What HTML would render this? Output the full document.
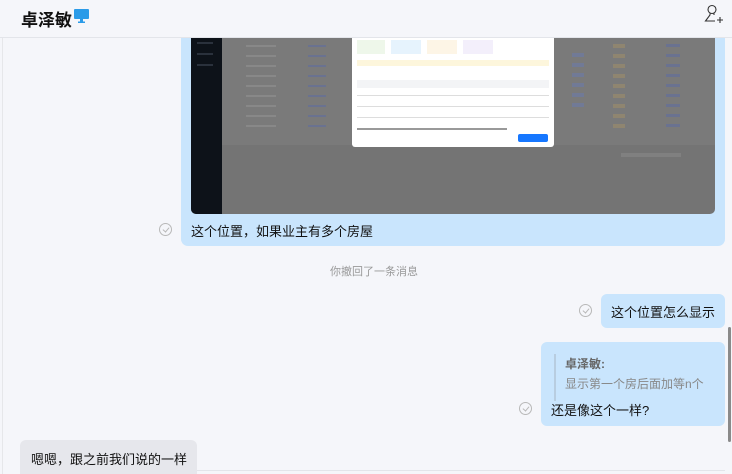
<!DOCTYPE html>
<html><head><meta charset="utf-8"><style>
*{margin:0;padding:0;box-sizing:border-box}
html,body{width:732px;height:474px;overflow:hidden}
body{background:#f5f6fa;font-family:"Liberation Sans","Noto Sans CJK SC",sans-serif;position:relative;color:#111}
.hdr{position:absolute;left:0;top:0;width:732px;height:38px;background:#f5f6fa;border-bottom:1px solid #e3e5ea}
.name{position:absolute;left:21px;top:6px;font-size:17px;font-weight:bold;color:#111}
.abs{position:absolute}
.bub{position:absolute;background:#c9e5fd;border-radius:6px}
.chk{position:absolute;width:13px;height:13px;border:1px solid #b8b8b8;border-radius:50%}
.chk:after{content:"";position:absolute;left:4px;top:2px;width:3px;height:5px;border:solid #b8b8b8;border-width:0 1px 1px 0;transform:rotate(40deg)}
.t{position:absolute;font-size:13px;white-space:nowrap;color:#111}
</style></head><body>
<div class="abs" style="left:0;top:38px;width:3px;height:436px;border-right:1px solid #e6e7ea"></div>
<div class="bub" style="left:181px;top:28px;width:544px;height:218px;border-radius:0 0 7px 7px"></div>
<div class="abs" style="left:191px;top:38px;width:524px;height:176px;background:#747474;border-radius:0 0 5px 5px;overflow:hidden">
  <div class="abs" style="left:0;top:0;width:31px;height:176px;background:#0d1219"></div>
  <div class="abs" style="left:31px;top:0;width:493px;height:107px;background:#7a7a7a"></div>
  <div class="abs" style="left:6px;top:4px;width:16px;height:2px;background:#2a313c"></div>
  <div class="abs" style="left:6px;top:15px;width:16px;height:2px;background:#2a313c"></div>
  <div class="abs" style="left:6px;top:26px;width:16px;height:2px;background:#2a313c"></div>
  <div class="abs" style="left:55px;top:4px;width:30px;height:90px;background:repeating-linear-gradient(#7a7a7a 0 3px,#888 3px 5px,#7a7a7a 5px 10px)"></div>
  <div class="abs" style="left:117px;top:4px;width:18px;height:90px;background:repeating-linear-gradient(#7a7a7a 0 3px,#6a7290 3px 5px,#7a7a7a 5px 10px)"></div>
  <div class="abs" style="left:381px;top:13px;width:12px;height:60px;background:repeating-linear-gradient(#7a7a7a 0 2px,#717a96 2px 6px,#7a7a7a 6px 10px)"></div>
  <div class="abs" style="left:422px;top:4px;width:12px;height:90px;background:repeating-linear-gradient(#7a7a7a 0 2px,#8f8570 2px 6px,#7a7a7a 6px 10px)"></div>
  <div class="abs" style="left:475px;top:4px;width:14px;height:90px;background:repeating-linear-gradient(#7a7a7a 0 2px,#6a7290 2px 5px,#7a7a7a 5px 10px)"></div>
  <div class="abs" style="left:161px;top:0;width:202px;height:109px;background:#fff;border-radius:0 0 3px 3px">
    <div class="abs" style="left:5px;top:2px;width:28px;height:14px;background:#eef7ea"></div>
    <div class="abs" style="left:39px;top:2px;width:30px;height:14px;background:#e6f3fd"></div>
    <div class="abs" style="left:75px;top:2px;width:30px;height:14px;background:#fdf5e6"></div>
    <div class="abs" style="left:111px;top:2px;width:30px;height:14px;background:#f3effb"></div>
    <div class="abs" style="left:5px;top:22px;width:192px;height:6px;background:#fdf6dc"></div>
    <div class="abs" style="left:5px;top:42px;width:192px;height:8px;background:#f3f4f6"></div>
    <div class="abs" style="left:5px;top:52px;width:192px;height:36px;background:repeating-linear-gradient(#fff 0 5px,#ddd 5px 6px,#fff 6px 11px)"></div>
    <div class="abs" style="left:5px;top:90px;width:150px;height:2px;background:#999"></div>
    <div class="abs" style="left:166px;top:96px;width:30px;height:8px;background:#1677ff;border-radius:2px"></div>
  </div>
  <div class="abs" style="left:430px;top:115px;width:60px;height:4px;background:#808080"></div>
</div>
<div class="hdr"><div class="name">卓泽敏</div>
<svg class="abs" style="left:74px;top:9px" width="15" height="15" viewBox="0 0 15 15"><rect x="0" y="0" width="15" height="10" rx="1" fill="#2b9be8"/><rect x="6" y="10" width="3" height="3" fill="#2b9be8"/><rect x="4" y="12.5" width="7" height="1.5" fill="#2b9be8"/></svg>
<svg class="abs" style="left:703px;top:4px" width="22" height="20" viewBox="0 0 22 20" fill="none" stroke="#333" stroke-width="1.1"><circle cx="9" cy="5.5" r="4"/><path d="M7 9.5 L7 11 L2.5 17 L12 17"/><path d="M11 9.5 L11 11"/><path d="M17 13v6M14 16h6"/></svg>
</div>
<div class="chk" style="left:159px;top:223px"></div>
<div class="t" style="left:191px;top:221px">这个位置，如果业主有多个房屋</div>
<div class="t" style="left:330px;top:263px;font-size:11px;color:#999">你撤回了一条消息</div>
<div class="bub" style="left:601px;top:294px;width:124px;height:34px"></div>
<div class="chk" style="left:579px;top:304px"></div>
<div class="t" style="left:611px;top:302px">这个位置怎么显示</div>
<div class="bub" style="left:541px;top:342px;width:184px;height:84px"></div>
<div class="abs" style="left:554px;top:354px;width:2px;height:47px;background:#b8cde0"></div>
<div class="t" style="left:565px;top:355px;font-size:12px;color:#666;font-weight:bold">卓泽敏:</div>
<div class="t" style="left:565px;top:375px;font-size:12px;color:#888">显示第一个房后面加等n个</div>
<div class="chk" style="left:519px;top:402px"></div>
<div class="t" style="left:551px;top:400px">还是像这个一样?</div>
<div class="abs" style="left:728px;top:327px;width:3px;height:115px;background:#8a8a8a;border-radius:2px"></div>
<div class="abs" style="left:20px;top:440px;width:177px;height:40px;background:#e6e7ec;border-radius:6px"></div>
<div class="t" style="left:31px;top:449px">嗯嗯，跟之前我们说的一样</div>
<div class="abs" style="left:197px;top:470px;width:528px;height:1px;background:#e3e5ea"></div>
</body></html>
